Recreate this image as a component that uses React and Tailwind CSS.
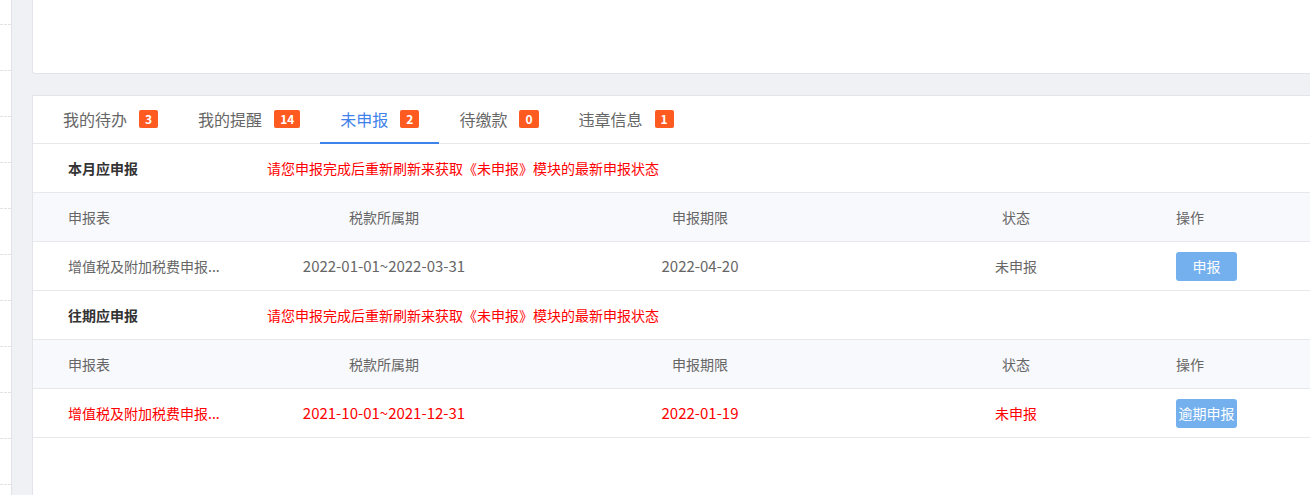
import React from "react";

const tabs = [
  { label: "我的待办", count: 3 },
  { label: "我的提醒", count: 14 },
  { label: "未申报", count: 2, active: true },
  { label: "待缴款", count: 0 },
  { label: "违章信息", count: 1 },
];

const sections = [
  {
    title: "本月应申报",
    rows: [
      { name: "增值税及附加税费申报...", period: "2022-01-01~2022-03-31", deadline: "2022-04-20", status: "未申报", action: "申报", overdue: false },
    ],
  },
  {
    title: "往期应申报",
    rows: [
      { name: "增值税及附加税费申报...", period: "2021-10-01~2021-12-31", deadline: "2022-01-19", status: "未申报", action: "逾期申报", overdue: true },
    ],
  },
];

function Section({ section }) {
  return (
    <div>
      <div className="flex h-[49px] items-center border-b border-[#e6e8ec]">
        <div className="w-[234px] pl-[35px] text-[14px] font-bold text-[#333]">{section.title}</div>
        <div className="text-[14px] text-[#ff0000]">请您申报完成后重新刷新来获取《未申报》模块的最新申报状态</div>
      </div>
      <div className="flex h-[49px] items-center border-b border-[#e6e8ec] bg-[#f8f9fc] text-[14px] text-[#666]">
        <div className="w-[200px] pl-[35px]">申报表</div>
        <div className="w-[302px] text-center">税款所属期</div>
        <div className="w-[330px] text-center">申报期限</div>
        <div className="w-[302px] text-center">状态</div>
        <div className="pl-[9px]">操作</div>
      </div>
      {section.rows.map((r, i) => (
        <div
          key={i}
          className={`flex h-[49px] items-center border-b border-[#e6e8ec] text-[14px] ${r.overdue ? "text-[#ff0000]" : "text-[#666]"}`}
        >
          <div className="w-[200px] pl-[35px]">{r.name}</div>
          <div className="w-[302px] text-center text-[15px]">{r.period}</div>
          <div className="w-[330px] text-center text-[15px]">{r.deadline}</div>
          <div className="w-[302px] text-center">{r.status}</div>
          <div className="pl-[9px]">
            <button className="flex h-[29px] w-[61px] items-center justify-center whitespace-nowrap rounded-[3px] bg-[#74b0ee] text-[14px] text-white">
              {r.action}
            </button>
          </div>
        </div>
      ))}
    </div>
  );
}

export default function App() {
  return (
    <div
      className="flex h-[495px] w-full overflow-hidden bg-[#f0f1f5]"
      style={{ fontFamily: '"Noto Sans CJK SC", "Noto Sans", sans-serif' }}
    >
      <div className="w-[11px] shrink-0 bg-white pt-[24px]">
        {Array.from({ length: 11 }).map((_, i) => (
          <div key={i} className="h-[46px] border-t border-dashed border-[#e3e3e3]" />
        ))}
      </div>
      <div className="w-[21px] shrink-0 border-l border-[#e2e3e8]" />
      <div className="flex min-w-0 flex-1 flex-col">
        <div className="h-[74px] shrink-0 rounded-bl-[3px] border-b border-l border-[#e2e4e9] bg-white" />
        <div className="mt-[21px] flex-1 border-l border-t border-[#e2e4e9] bg-white">
          <div className="flex h-[48px] border-b border-[#e6e8ec] pl-[10px]">
            {tabs.map((t) => (
              <div
                key={t.label}
                className={`-mb-px flex h-[48px] items-center gap-3 border-b-2 px-5 text-[16px] ${t.active ? "border-[#3f82ea] text-[#3f82ea]" : "border-transparent text-[#666]"}`}
              >
                <span>{t.label}</span>
                <span className="flex h-[18px] min-w-[18px] items-center justify-center rounded-[2px] bg-[#ff5a1f] px-[6px] text-[12px] font-bold leading-none text-white">
                  {t.count}
                </span>
              </div>
            ))}
          </div>
          {sections.map((s) => (
            <Section key={s.title} section={s} />
          ))}
        </div>
      </div>
    </div>
  );
}
